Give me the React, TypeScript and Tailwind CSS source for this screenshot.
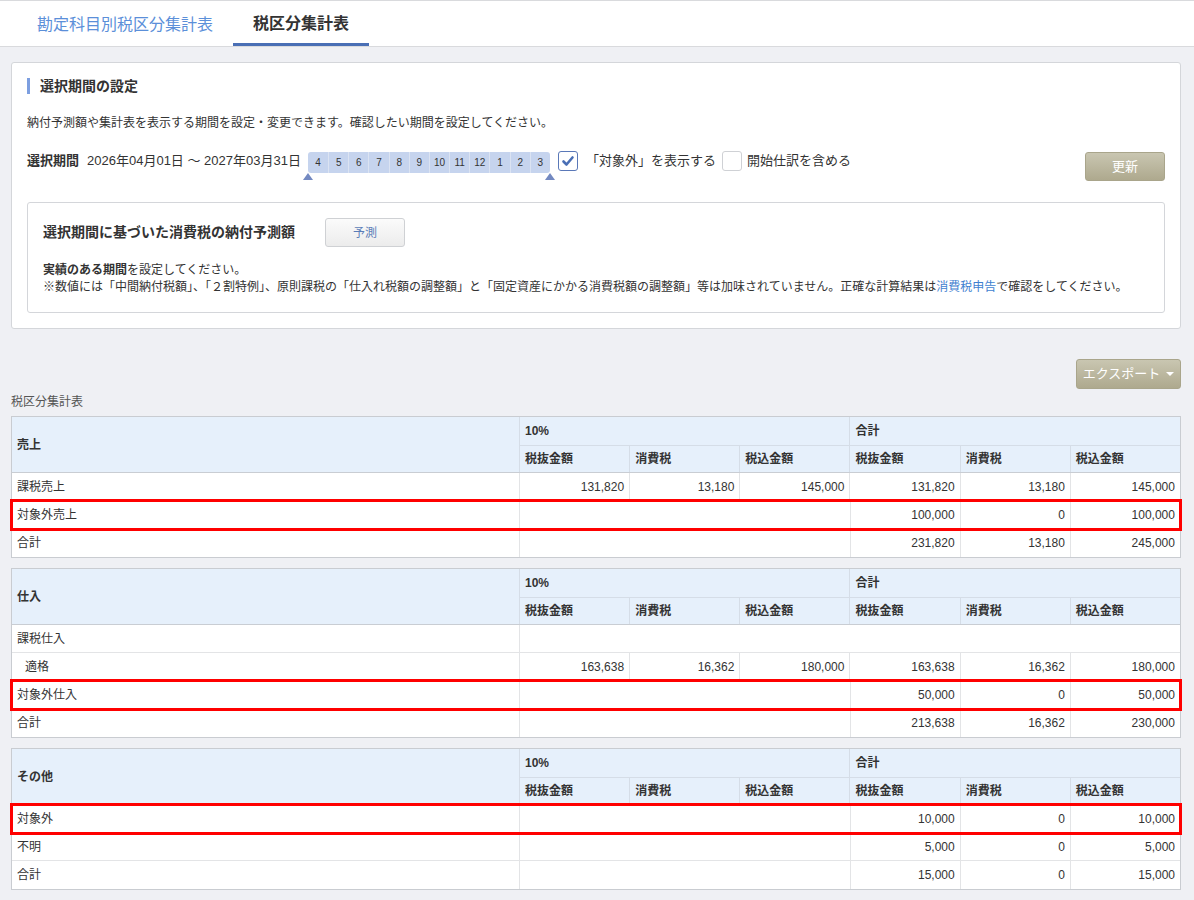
import { clsx } from "clsx";

type Row = {
  label: string;
  indent?: boolean;
  ten?: string[] | null;
  total?: string[] | null;
  mark?: boolean;
};

type Section = { title: string; rows: Row[] };

const SUBS = ["税抜金額", "消費税", "税込金額", "税抜金額", "消費税", "税込金額"];

const SECTIONS: Section[] = [
  {
    title: "売上",
    rows: [
      { label: "課税売上", ten: ["131,820", "13,180", "145,000"], total: ["131,820", "13,180", "145,000"] },
      { label: "対象外売上", ten: null, total: ["100,000", "0", "100,000"], mark: true },
      { label: "合計", ten: null, total: ["231,820", "13,180", "245,000"] },
    ],
  },
  {
    title: "仕入",
    rows: [
      { label: "課税仕入" },
      { label: "適格", indent: true, ten: ["163,638", "16,362", "180,000"], total: ["163,638", "16,362", "180,000"] },
      { label: "対象外仕入", ten: null, total: ["50,000", "0", "50,000"], mark: true },
      { label: "合計", ten: null, total: ["213,638", "16,362", "230,000"] },
    ],
  },
  {
    title: "その他",
    rows: [
      { label: "対象外", ten: null, total: ["10,000", "0", "10,000"], mark: true },
      { label: "不明", ten: null, total: ["5,000", "0", "5,000"] },
      { label: "合計", ten: null, total: ["15,000", "0", "15,000"] },
    ],
  },
];

const MONTHS = ["4", "5", "6", "7", "8", "9", "10", "11", "12", "1", "2", "3"];

function NumCells({ values }: { values?: string[] | null }) {
  if (!values) {
    return <div className="col-span-3 border-l border-[#e3e4e6]" />;
  }
  return (
    <>
      {values.map((v, i) => (
        <div key={i} className="flex items-center justify-end px-[5px] border-l border-[#e3e4e6]">
          {v}
        </div>
      ))}
    </>
  );
}

function TaxTable({ section }: { section: Section }) {
  return (
    <div className="border border-[#c9ccd1] bg-white text-[12px] text-[#333]">
      {/* header */}
      <div className="grid grid-cols-[507px_repeat(6,minmax(0,1fr))] grid-rows-[28px_27px] bg-[#e6f0fb] border-b border-[#c9cdd3] font-bold">
        <div className="row-span-2 flex items-center px-[5px]">{section.title}</div>
        <div className="col-span-3 flex items-center px-[5px] border-l border-[#d5dde7]">10%</div>
        <div className="col-span-3 flex items-center px-[5px] border-l border-[#d5dde7]">合計</div>
        {SUBS.map((s, i) => (
          <div key={i} className="flex items-center px-[5px] border-l border-t border-[#d5dde7]">
            {s}
          </div>
        ))}
      </div>
      {/* body */}
      <div>
        {section.rows.map((r, i) => (
          <div
            key={i}
            className={clsx(
              "grid grid-cols-[507px_repeat(6,minmax(0,1fr))] h-[28px] border-b border-[#e3e4e6] last:border-b-0",
              r.mark && "relative z-10 outline-3 outline-[#ff0000] -outline-offset-1"
            )}
          >
            <div className={clsx("flex items-center", r.indent ? "pl-[13px]" : "px-[5px]")}>{r.label}</div>
            {r.ten === undefined && r.total === undefined ? (
              <div className="col-span-6 border-l border-[#e3e4e6]" />
            ) : (
              <>
                <NumCells values={r.ten} />
                <NumCells values={r.total} />
              </>
            )}
          </div>
        ))}
      </div>
    </div>
  );
}

export default function App() {
  return (
    <div className="min-h-screen bg-[#eff0f4] font-['Liberation_Sans','Noto_Sans_CJK_JP',sans-serif] text-[#333]">
      {/* Tabs */}
      <div className="flex h-[47px] bg-white border-t border-b border-[#d9dadd] pl-[17px]">
        <div className="flex items-center px-[20px] pt-[3px] text-[16px] text-[#5b8fd9]">勘定科目別税区分集計表</div>
        <div className="flex items-center px-[20px] pt-[3px] text-[16px] font-bold text-[#333] border-b-[3px] border-[#4a6fb5]">
          税区分集計表
        </div>
      </div>

      <div className="pl-[11px] pr-[13px] pb-[12px]">
        {/* Settings panel */}
        <div className="mt-[15px] rounded-[3px] border border-[#d4d6da] bg-white px-[15px] pt-[15px] pb-[15px]">
          <div className="flex h-[16px] items-center">
            <span className="h-[16px] w-[3px] bg-[#7d9fe0]" />
            <span className="ml-[10px] text-[14px] font-bold leading-[16px]">選択期間の設定</span>
          </div>
          <p className="mt-[20px] text-[12px] leading-[18px]">
            納付予測額や集計表を表示する期間を設定・変更できます。確認したい期間を設定してください。
          </p>

          {/* Period row */}
          <div className="mt-[19px] flex h-[30px] items-start">
            <span className="text-[13px] font-bold leading-[20px]">選択期間</span>
            <span className="ml-[8px] text-[13px] leading-[20px]">2026年04月01日 ～ 2027年03月31日</span>
            <div className="relative ml-[7px] mt-[1px] w-[242px]">
              <div className="grid h-[21px] grid-cols-12 overflow-hidden rounded-[3px] bg-[#c6d4ee]">
                {MONTHS.map((m, i) => (
                  <div
                    key={i}
                    className={clsx(
                      "flex items-center justify-center text-[10px] text-[#333]",
                      i > 0 && "border-l border-[#dbe3f2]"
                    )}
                  >
                    {m}
                  </div>
                ))}
              </div>
              <span className="absolute left-[-5px] top-[21px] h-0 w-0 border-x-[5px] border-b-[7px] border-x-transparent border-b-[#7389c1]" />
              <span className="absolute right-[-5px] top-[21px] h-0 w-0 border-x-[5px] border-b-[7px] border-x-transparent border-b-[#7389c1]" />
            </div>
            <span className="ml-[8px] flex h-[20px] w-[20px] items-center justify-center rounded-[3px] border border-[#5a78b8] bg-white">
              <svg width="14" height="14" viewBox="0 0 14 14" fill="none">
                <polyline points="2.5 7.5 5.5 10.5 11.5 3.5" stroke="#4a6fb5" strokeWidth="2.6" strokeLinecap="round" strokeLinejoin="round" />
              </svg>
            </span>
            <span className="ml-[8px] text-[13px] leading-[20px]">「対象外」を表示する</span>
            <span className="ml-[6px] h-[20px] w-[20px] rounded-[3px] border border-[#cfd1d5] bg-white" />
            <span className="ml-[5px] text-[13px] leading-[20px]">開始仕訳を含める</span>
            <button className="ml-auto mt-[1px] h-[29px] w-[80px] rounded-[3px] border border-[#a9a58b] bg-gradient-to-b from-[#c9c6b1] to-[#aea98e] text-[13px] text-white">
              更新
            </button>
          </div>

          {/* Forecast box */}
          <div className="mt-[21px] rounded-[3px] border border-[#d4d6da] px-[15px] pt-[15px] pb-[16px]">
            <div className="flex h-[29px] items-center">
              <span className="text-[14px] font-bold">選択期間に基づいた消費税の納付予測額</span>
              <button className="ml-[30px] h-[29px] w-[80px] rounded-[3px] border border-[#cfd1d4] bg-gradient-to-b from-[#fbfbfb] to-[#ececec] text-[12px] text-[#5b7db8]">
                予測
              </button>
            </div>
            <p className="mt-[14px] text-[12px] leading-[18px]">
              <span className="font-bold">実績のある期間</span>を設定してください。
            </p>
            <p className="text-[12px] leading-[17px]">
              ※数値には「中間納付税額」、「２割特例」、原則課税の「仕入れ税額の調整額」と「固定資産にかかる消費税額の調整額」等は加味されていません。正確な計算結果は
              <span className="text-[#3f7fd0]">消費税申告</span>で確認をしてください。
            </p>
          </div>
        </div>

        {/* Export */}
        <div className="mt-[30px] flex justify-end">
          <button className="flex h-[30px] w-[105px] items-center justify-center gap-[6px] rounded-[3px] border border-[#a9a58b] bg-gradient-to-b from-[#c9c6b1] to-[#aea98e] text-[13px] text-white">
            エクスポート
            <span className="h-0 w-0 border-x-[4px] border-t-[4px] border-x-transparent border-t-white" />
          </button>
        </div>
        <div className="mt-[5px] h-[16px] text-[12px] leading-[16px] text-[#555]">税区分集計表</div>

        <div className="mt-[6px] flex flex-col gap-[10px]">
          {SECTIONS.map((s) => (
            <TaxTable key={s.title} section={s} />
          ))}
        </div>
      </div>
    </div>
  );
}
